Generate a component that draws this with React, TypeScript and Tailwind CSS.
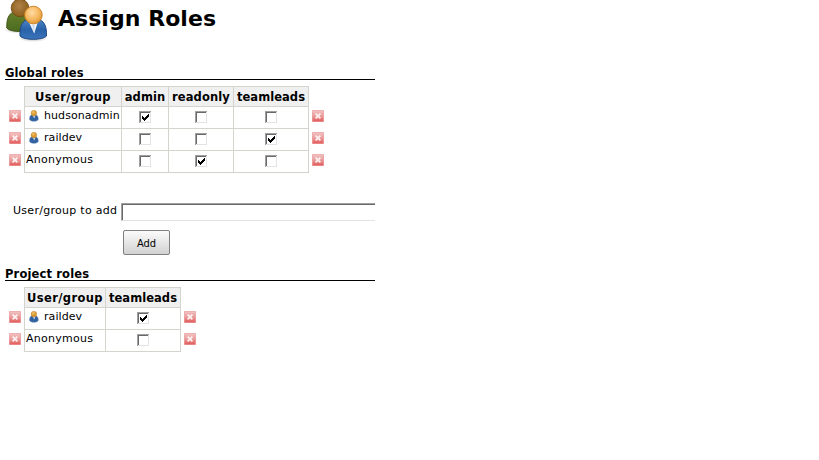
import React from "react";

type Row = { name: string; user: boolean; checks: boolean[] };
type Column = { label: string; cell: string; text: string };

function DeleteIcon() {
  return (
    <svg width="12" height="12" viewBox="0 0 12 12" className="block shrink-0">
      <defs>
        <linearGradient id="del" x1="0" y1="0" x2="0" y2="1">
          <stop offset="0" stopColor="#f3c4c4" />
          <stop offset="0.5" stopColor="#e99c9c" />
          <stop offset="1" stopColor="#e35656" />
        </linearGradient>
      </defs>
      <rect x="0.3" y="0.3" width="11.4" height="11.4" rx="0.8" fill="url(#del)" stroke="#e58a8a" strokeWidth="0.6" />
      <path d="M3.6 3.6 8.4 8.4M8.4 3.6 3.6 8.4" stroke="#fdf0f0" strokeWidth="1.8" />
    </svg>
  );
}

function UserIcon() {
  return (
    <svg width="10" height="12" viewBox="0 0 10 12" className="block shrink-0">
      <path d="M0.6 9.4C0.4 7 1.2 5.4 2.6 4.8H7C8.5 5.4 9.4 7 9.2 9.4C8.6 11.8 1.2 11.8 0.6 9.4Z" fill="#31619f" stroke="#5f83b3" strokeWidth="0.5" />
      <path d="M3.9 6H6.2L5.3 8.4Z" fill="#c9d8ea" />
      <circle cx="4.9" cy="3.1" r="2.9" fill="#dd9a2f" stroke="#b9904f" strokeWidth="0.4" />
      <circle cx="4.4" cy="2.3" r="1.2" fill="#f0bd62" />
    </svg>
  );
}

function UsersIcon() {
  return (
    <svg width="48" height="42" viewBox="0 0 48 42" className="block shrink-0">
      <defs>
        <radialGradient id="backHead" cx="0.45" cy="0.4" r="0.65">
          <stop offset="0" stopColor="#b08247" />
          <stop offset="1" stopColor="#875a19" />
        </radialGradient>
        <radialGradient id="frontHead" cx="0.42" cy="0.36" r="0.65">
          <stop offset="0" stopColor="#ffdca6" />
          <stop offset="0.6" stopColor="#f5b85f" />
          <stop offset="1" stopColor="#e39a38" />
        </radialGradient>
        <linearGradient id="green" x1="0" y1="0" x2="0" y2="1">
          <stop offset="0" stopColor="#67802c" />
          <stop offset="1" stopColor="#4a6b1e" />
        </linearGradient>
        <linearGradient id="blue" x1="0" y1="0" x2="0" y2="1">
          <stop offset="0" stopColor="#4c84c6" />
          <stop offset="0.5" stopColor="#2a62a9" />
          <stop offset="1" stopColor="#3a74ba" />
        </linearGradient>
        <radialGradient id="shade">
          <stop offset="0" stopColor="#000" stopOpacity="0.35" />
          <stop offset="1" stopColor="#000" stopOpacity="0" />
        </radialGradient>
      </defs>
      <ellipse cx="18" cy="29.5" rx="14" ry="4" fill="url(#shade)" />
      <ellipse cx="33" cy="38" rx="15" ry="4" fill="url(#shade)" />
      <path d="M6.8 28C6.6 19 8.5 14.5 13 12.3H26C30 14.5 32 19 32 28C28 32.4 10 32.6 6.8 28Z" fill="url(#green)" stroke="#405316" strokeWidth="1" />
      <circle cx="20" cy="7.9" r="8.8" fill="url(#backHead)" stroke="#754d12" strokeWidth="0.9" />
      <path d="M20 36C19.6 27 21.8 22 26.5 19.8H40C44.6 22 46.8 27 46.5 36C43 40.4 23.5 40.4 20 36Z" fill="url(#blue)" stroke="#204a87" strokeWidth="1" />
      <path d="M28.8 22H37.8L34.2 33.5Z" fill="#f0f4f9" />
      <path d="M32.2 24.5H34.4L34.2 33Z" fill="#c8d7e9" />
      <circle cx="33.4" cy="15" r="8.8" fill="url(#frontHead)" stroke="#c67c1c" strokeWidth="0.9" />
    </svg>
  );
}

function Check({ on }: { on: boolean }) {
  return (
    <svg width="13" height="13" viewBox="0 0 13 13" shapeRendering="crispEdges" className="block" role="checkbox" aria-checked={on}>
      <path d="M0 0H12V1H1V12H0Z" fill="#a0a0a0" />
      <path d="M1 1H11V2H2V11H1Z" fill="#696969" />
      <path d="M11 1H12V12H1V11H11Z" fill="#e3e3e3" />
      {on && <path d="M3 5H4V6H5V7H6V6H7V5H8V4H9V3H10V6H9V7H8V8H7V9H6V10H5V9H4V8H3Z" fill="#000" />}
    </svg>
  );
}

function RoleTable({ columns, rows }: { columns: Column[]; rows: Row[] }) {
  return (
    <div>
      <div className="ml-6 flex h-[21px]">
        {columns.map((c, i) => (
          <div
            key={c.label}
            className={`${c.cell} ${i === 0 ? "border-l" : ""} flex shrink-0 justify-center border-y border-r border-[#d4d4cf] bg-[#f0f0f0] pt-1 text-[11.5px] font-bold`}
          >
            <span className={c.text}>{c.label}</span>
          </div>
        ))}
      </div>
      {rows.map((r) => (
        <div key={r.name} className="flex h-[22px]">
          <div className="w-6 shrink-0 pt-[3px] pl-[9px]">
            <DeleteIcon />
          </div>
          <div className={`${columns[0].cell} flex shrink-0 border-r border-b border-l border-[#d4d4cf] pt-[2px] pl-px`}>
            {r.user && (
              <span className="mr-[5px] ml-[3px] pt-px">
                <UserIcon />
              </span>
            )}
            <span className={r.user ? "tracking-[0.08px]" : "tracking-[0.25px]"}>{r.name}</span>
          </div>
          {r.checks.map((on, i) => (
            <div key={i} className={`${columns[i + 1].cell} flex shrink-0 justify-center border-r border-b border-[#d4d4cf] pt-1`}>
              <Check on={on} />
            </div>
          ))}
          <div className="pt-[3px] pl-[3px]">
            <DeleteIcon />
          </div>
        </div>
      ))}
    </div>
  );
}

const globalColumns: Column[] = [
  { label: "User/group", cell: "w-[98px]", text: "tracking-[0.38px]" },
  { label: "admin", cell: "w-[47px]", text: "tracking-[0.1px]" },
  { label: "readonly", cell: "w-[65px]", text: "tracking-[0.1px]" },
  { label: "teamleads", cell: "w-[75px]", text: "tracking-[0.05px]" },
];

const projectColumns: Column[] = [
  { label: "User/group", cell: "w-[82px]", text: "tracking-[0.38px]" },
  { label: "teamleads", cell: "w-[75px]", text: "tracking-[0.05px]" },
];

const globalRows: Row[] = [
  { name: "hudsonadmin", user: true, checks: [true, false, false] },
  { name: "raildev", user: true, checks: [false, false, true] },
  { name: "Anonymous", user: false, checks: [false, true, false] },
];

const projectRows: Row[] = [
  { name: "raildev", user: true, checks: [true] },
  { name: "Anonymous", user: false, checks: [false] },
];

export default function App() {
  return (
    <main className="h-[460px] w-[819px] overflow-hidden bg-white font-['DejaVu_Sans',sans-serif] text-[11px] leading-[13px] whitespace-nowrap text-black">
      <header className="flex h-[66px]">
        <UsersIcon />
        <h1 className="ml-[10px] pt-[6px] text-[22px] leading-[26px] font-bold tracking-[0.05px]">Assign Roles</h1>
      </header>

      <h2 className="ml-[5px] h-[14px] w-[370px] border-b border-black text-[11.5px] leading-[14px] font-bold tracking-[0.1px]">Global roles</h2>
      <div className="mt-[6px]">
        <RoleTable columns={globalColumns} rows={globalRows} />
      </div>

      <form className="mt-[30px] w-[375px] overflow-hidden">
        <div className="flex h-[18px]">
          <label className="w-[121px] shrink-0 pt-[1px] pl-[13px] tracking-[0.28px]">User/group to add</label>
          <div className="h-[18px] grow border-t border-b border-l border-t-[#a0a0a0] border-b-[#e3e3e3] border-l-[#a0a0a0]">
            <div className="h-4 border-t border-l border-[#696969]" />
          </div>
        </div>
        <button
          type="button"
          className="mt-[9px] ml-[123px] block h-[25px] w-[47px] rounded-[2px] border border-[#808080] bg-linear-to-b from-[#fbfbfb] to-[#d2d2d2] pt-[2px] font-['DejaVu_Sans_Condensed','DejaVu_Sans',sans-serif]"
        >
          Add
        </button>
      </form>

      <h2 className="mt-3 ml-[5px] h-[14px] w-[370px] border-b border-black text-[11.5px] leading-[14px] font-bold tracking-[0.15px]">Project roles</h2>
      <div className="mt-[6px]">
        <RoleTable columns={projectColumns} rows={projectRows} />
      </div>
    </main>
  );
}
